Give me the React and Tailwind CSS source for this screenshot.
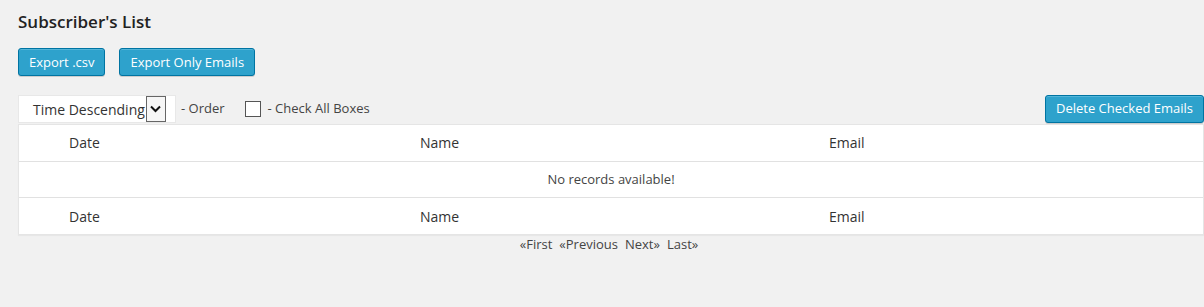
export default function App() {
  const btn =
    "h-[28px] px-[10px] rounded-[3px] border border-[#0074a2] bg-[#2ea2cc] text-white text-[13px] leading-none shadow-[inset_0_1px_0_rgba(120,200,230,0.5),0_1px_0_rgba(0,0,0,0.15)] flex items-center";
  const row = "grid grid-cols-[40px_351px_409px_1fr] items-center text-[14px] text-[#333]";
  return (
    <div className="w-[1204px] h-[307px] bg-[#f1f1f1] font-['Open_Sans',sans-serif] text-[#444] overflow-hidden">
      <div className="pl-[18px] pt-[11px]">
        <h2 className="text-[17px] font-semibold text-[#222] leading-[22px]">Subscriber's List</h2>
        <div className="flex gap-[14px] mt-[15px]">
          <button className={btn}>Export .csv</button>
          <button className={btn}>Export Only Emails</button>
        </div>
        <div className="flex items-center justify-between mt-[19px]">
          <div className="flex items-center text-[13px] text-[#444]">
            <div className="flex items-center w-[158px] h-[28px] bg-white border border-[#e8e8e8] pl-[14px]">
              <span className="text-[14px] text-[#333]">Time Descending</span>
              <span className="ml-[1px] w-[20px] h-[26px] border border-[#666] bg-[#f6f6f6] flex items-center justify-center">
                <svg width="11" height="8" viewBox="0 0 11 8"><path d="M1 1.5 L5.5 6 L10 1.5" fill="none" stroke="#111" strokeWidth="2" /></svg>
              </span>
            </div>
            <span className="ml-[5px]">- Order</span>
            <span className="ml-[20px] w-[16px] h-[16px] border border-[#555] bg-white"></span>
            <span className="ml-[7px]">- Check All Boxes</span>
          </div>
          <button className={btn + " mt-[-1px]"}>Delete Checked Emails</button>
        </div>
        <div className="mt-[1px] bg-white border border-[#e5e5e5] shadow-[0_1px_1px_rgba(0,0,0,0.04)]">
          <div className={row + " h-[37px] pb-[1px] border-b border-[#e1e1e1]"}>
            <div></div>
            <div className="pl-[10px]">Date</div>
            <div className="pl-[10px]">Name</div>
            <div className="pl-[10px]">Email</div>
          </div>
          <div className="h-[36px] pt-[1px] flex items-center justify-center text-[13px] text-[#444] border-b border-[#e1e1e1]">
            No records available!
          </div>
          <div className={row + " h-[36px]"}>
            <div></div>
            <div className="pl-[10px]">Date</div>
            <div className="pl-[10px]">Name</div>
            <div className="pl-[10px]">Email</div>
          </div>
        </div>
        <div className="flex justify-center gap-[7px] text-[13px] text-[#444] leading-[18px] pr-[4px]">
          <span>«First</span>
          <span>«Previous</span>
          <span>Next»</span>
          <span>Last»</span>
        </div>
      </div>
    </div>
  );
}
